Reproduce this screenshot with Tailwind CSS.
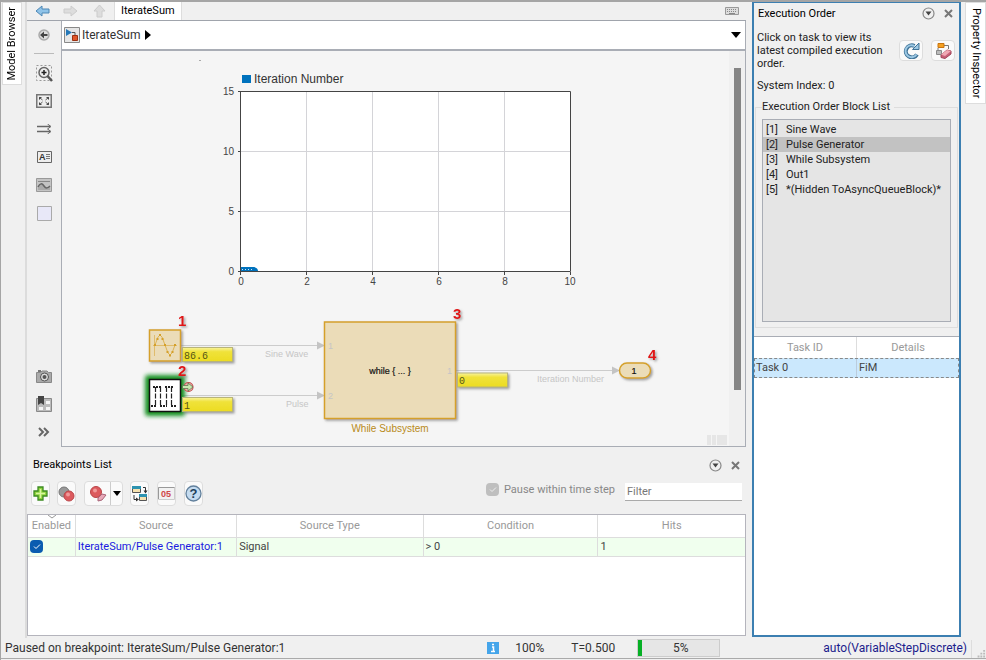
<!DOCTYPE html>
<html lang="en">
<head>
    <meta charset="UTF-8"/>
    <meta content="width=device-width, initial-scale=1.0" name="viewport"/>
    <script src="https://cdn.jsdelivr.net/npm/@tailwindcss/browser@4"></script>
    <title>IterateSum</title>
</head>
<body class="bg-[#f0f0f0] font-[Roboto,sans-serif] text-[11px] leading-4 text-[#222]">
<div class="flex h-screen flex-col border-t-2 border-l border-[#a5a5a5]">
    <main class="flex min-h-0 flex-1">
        <!-- left rail -->
        <aside class="w-[26px] shrink-0 border-r-2 border-[#dcdcdc] pl-px">
            <button class="flex h-[83px] w-5 items-center justify-center border border-[#ddd] bg-white text-black" type="button">
                <span class="rotate-180 whitespace-nowrap [writing-mode:vertical-rl]">Model Browser</span>
            </button>
        </aside>

        <div class="flex min-w-0 flex-1 flex-col">
            <!-- editor tabs -->
            <div class="flex h-[19px] shrink-0 items-center border-b border-[#a0a4ac] pl-2 pr-[7px]">
                <button class="mr-[13px]" type="button" aria-label="Back">
                    <svg width="15" height="12" viewBox="0 0 15 12"><path d="M1 6 7 1v3h7v4H7v3z" fill="#8fc3e8" stroke="#4d87b5"/></svg>
                </button>
                <button class="mr-[15px]" type="button" aria-label="Forward">
                    <svg width="15" height="12" viewBox="0 0 15 12"><path d="M14 6 8 1v3H1v4h7v3z" fill="#ddd" stroke="#ccc"/></svg>
                </button>
                <button class="mr-[8px]" type="button" aria-label="Up">
                    <svg width="13" height="14" viewBox="0 0 13 14"><path d="M6.500 1 12 7H9v6H4V7H1z" fill="#ddd" stroke="#ccc"/></svg>
                </button>
                <a class="flex h-[18px] items-center border-x border-[#ddd] bg-white px-[6px] text-black" href="#">IterateSum</a>
                <svg class="ml-auto" width="14" height="8" viewBox="0 0 14 8"><path d="M.5.5h13v7H.5z" fill="#ddd" stroke="#999"/><path d="M2 2.500h10M2 4.500h10" stroke="#888" stroke-dasharray="1 1"/><path d="M4 6.500h6" stroke="#888"/></svg>
            </div>

            <div class="flex min-h-0 flex-1">
                <!-- palette -->
                <div class="flex w-[34px] shrink-0 flex-col items-center pb-px">
                    <button class="flex h-[28px] w-full items-center justify-center" type="button" aria-label="Hide browser">
                        <svg width="12" height="12" viewBox="0 0 12 12"><circle cx="6" cy="6" r="5" fill="#ddd" stroke="#aaa" stroke-width="1.500"/><path d="M2 6 6 2.500V5h3.500v2H6v2.500z" fill="#444"/></svg>
                    </button>
                    <div class="mt-1 mb-[5px] h-px w-5 shrink-0 bg-[#bbb]"></div>
                    <button class="flex h-7 w-full items-center justify-center" type="button" aria-label="Zoom">
                        <svg width="17" height="17" viewBox="0 0 17 17" fill="none"><path d="M.5.5h15v15H.5z" stroke="#999" stroke-dasharray="2 2"/><circle cx="8" cy="7.500" r="5" fill="#eee" stroke="#666" stroke-width="1.500"/><path d="M5.500 7.500h5M8 5v5" stroke="#222" stroke-width="1.500"/><path d="m11.500 11 4.500 5" stroke="#555" stroke-width="2.500"/></svg>
                    </button>
                    <button class="flex h-7 w-full items-center justify-center" type="button" aria-label="Fit to view">
                        <svg width="16" height="14" viewBox="0 0 16 14"><path d="M.75.75h14.500v12.500H.75z" fill="#eee" stroke="#777" stroke-width="1.500"/><path d="M3 6V3h3zM10 3h3v3zM3 8v3h3zM10 11h3V8z" fill="#444"/><path d="m3 3 3.500 3M13 3 9.500 6M3 11l3.500-3M13 11 9.500 8" fill="none" stroke="#555"/></svg>
                    </button>
                    <button class="flex h-7 w-full items-center justify-center" type="button" aria-label="Signals">
                        <svg width="15" height="10" viewBox="0 0 15 10" fill="none" stroke="#666"><path d="M0 2.500h13M0 7.500h13" stroke-width="1.500"/><path d="m10.500 0 3.500 2.500L10.500 5M10.500 5 14 7.500 10.500 10"/></svg>
                    </button>
                    <button class="flex h-7 w-full items-center justify-center" type="button" aria-label="Annotation">
                        <svg width="15" height="12" viewBox="0 0 15 12"><path d="M.5.5h14v11H.5z" fill="#eee" stroke="#666"/><text x="2" y="9" font-size="9" font-weight="bold" font-family="Liberation Sans" fill="#333">A</text><path d="M9 3.500h4M9 5.500h4M9 7.500h4" stroke="#777"/></svg>
                    </button>
                    <button class="flex h-7 w-full items-center justify-center" type="button" aria-label="Image">
                        <svg width="16" height="14" viewBox="0 0 16 14"><path d="M.5.5h15v13H.5z" fill="#c4c4c4" stroke="#999"/><path d="M2 3.500h12" stroke="#888"/><path d="M2 9c2-4 4-4 6-1s4 2 6 0v4H2z" fill="#aaa"/><path d="M2 9c2-4 4-4 6-1s4 2 6 0" fill="none" stroke="#666" stroke-width="1.500"/></svg>
                    </button>
                    <button class="flex h-7 w-full items-center justify-center" type="button" aria-label="Area">
                        <svg width="15" height="15" viewBox="0 0 15 15"><path d="M.5.500h14v14H.5z" fill="#e8e8f8" stroke="#aaa"/></svg>
                    </button>
                    <button class="mt-auto flex h-7 w-full items-center justify-center" type="button" aria-label="Screenshot">
                        <svg width="16" height="13" viewBox="0 0 16 13"><path d="M2 0h3v2H2z" fill="#777"/><path d="M.5 2.500h4L6 1h5l1.500 1.500h3v10H.5z" fill="#aaa" stroke="#888"/><circle cx="8.500" cy="7" r="4" fill="#ddd" stroke="#555"/><circle cx="8.500" cy="7" r="2" fill="#555"/></svg>
                    </button>
                    <button class="flex h-7 w-full items-center justify-center" type="button" aria-label="Model views">
                        <svg width="16" height="16" viewBox="0 0 16 16"><path d="M.5 2.500h15v13H.5z" fill="#bbb" stroke="#888"/><path d="M10 5h4v3h-4zM3 11h4v3H3zM10 11h4v3h-4z" fill="#f5f5f5"/><path d="M2 0h6v9L5 7 2 9z" fill="#444"/></svg>
                    </button>
                    <button class="flex h-7 w-full items-center justify-center" type="button" aria-label="More">
                        <svg width="12" height="10" viewBox="0 0 12 10" fill="none" stroke="#666" stroke-width="2"><path d="m1 1 4 4-4 4M6 1l4 4-4 4"/></svg>
                    </button>
                </div>

                <div class="flex min-w-0 flex-1 flex-col border-r border-b border-l border-[#a9adb5]">
                    <!-- model path -->
                    <div class="flex h-[30px] shrink-0 items-center border-b-2 border-[#a9adb5] bg-white pr-1 pl-[2px] text-xs">
                        <svg class="mr-[2px]" width="16" height="16" viewBox="0 0 16 16"><path d="M.5.5h15v15H.5z" fill="#e6e6e6" stroke="#888"/><path d="M2 2v7l6-3.500z" fill="#2478b8"/><path d="M8 5.500h3v3" fill="none" stroke="#555"/><path d="M8.500 8.500h5v5h-5z" fill="#e0562a" stroke="#9c3010"/></svg>
                        <a class="text-[#333]" href="#">IterateSum</a>
                        <svg class="ml-[5px]" width="6" height="10" viewBox="0 0 6 10"><path d="M0 0v10l6-5z"/></svg>
                        <button class="ml-auto" type="button" aria-label="History"><svg width="10" height="6" viewBox="0 0 10 6"><path d="M0 0h10L5 6z"/></svg></button>
                    </div>

                    <!-- block diagram -->
                    <div class="flex min-h-0 flex-1">
                        <div class="min-w-0 flex-1 overflow-hidden bg-[#f5f5f5]">
                            <svg class="font-['Liberation_Sans',sans-serif]" width="667" height="395" viewBox="62 51 667 395">
                                <defs>
                                    <filter id="shadow" x="-20%" y="-20%" width="150%" height="150%"><feDropShadow dx="1.500" dy="1.500" stdDeviation="1" flood-color="#777" flood-opacity=".7"/></filter>
                                    <filter id="glow" x="-40%" y="-40%" width="180%" height="180%"><feGaussianBlur stdDeviation="2"/></filter>
                                    <linearGradient id="value" x2="0" y2="1"><stop stop-color="#f8f4a0"/><stop offset=".3" stop-color="#f0e23a"/><stop offset="1" stop-color="#ecdc22"/></linearGradient>
                                </defs>
                                <!-- chart -->
                                <path d="M199 60.500h2" stroke="#aaa"/>
                                <path d="M242 75h9v8h-9z" fill="#0072bd"/>
                                <text x="254" y="83" font-size="12" fill="#333">Iteration Number</text>
                                <path d="M240.500 91.500h330v180h-330z" fill="#fff"/>
                                <path d="M306.500 92v180M372.500 92v180M438.500 92v180M504.500 92v180M241 151.500h330M241 211.500h330" stroke="#d4d4d8"/>
                                <path d="M240.500 91.500h330v180h-330zM238 91.500h3M238 151.500h3M238 211.500h3M238 271.500h3M240.500 272v3M306.500 272v3M372.500 272v3M438.500 272v3M504.500 272v3M570.500 272v3" fill="none" stroke="#444"/>
                                <path d="M241 271v-4h13q4 1 4 4z" fill="#0072bd"/>
                                <path d="M242 269.500h12" stroke="#cde4f4" stroke-dasharray="1 2"/>
                                <g font-size="10" fill="#444" text-anchor="end">
                                    <text x="234" y="95">15</text><text x="234" y="155">10</text><text x="234" y="215">5</text><text x="234" y="275">0</text>
                                </g>
                                <g font-size="10" fill="#444" text-anchor="middle">
                                    <text x="241" y="285">0</text><text x="307" y="285">2</text><text x="373" y="285">4</text><text x="439" y="285">6</text><text x="505" y="285">8</text><text x="570" y="285">10</text>
                                </g>
                                <!-- signals -->
                                <path d="M181 345.500h137M181 395.500h137M456 370.500h158" stroke="#ccc"/>
                                <path d="m317 341.500 8 4-8 4zM317 391.500l8 4-8 4zM612 366.500l8 4-8 4z" fill="#c4c4c4"/>
                                <g font-size="9" fill="#c6c6c6">
                                    <text x="265" y="357">Sine Wave</text><text x="286" y="407">Pulse</text><text x="537" y="382">Iteration Number</text>
                                </g>
                                <!-- blocks -->
                                <g fill="#ebdcb8" stroke="#d5a02a" stroke-width="1.500" filter="url(#shadow)">
                                    <rect x="149.500" y="330" width="31" height="31"/>
                                    <rect x="324.500" y="322" width="131" height="96.500"/>
                                    <rect x="619.500" y="363" width="31" height="15" rx="7.500"/>
                                </g>
                                <path d="M154.500 335v21M153 345.500h24" stroke="#e0bc6c"/>
                                <path d="m155 345 3-8 2-2 2 2 3 8 3 8 2 2 2-2 3-8" fill="none" stroke="#d5a02a" stroke-width=".7"/>
                                <path d="M154 344h2v2h-2zM156.500 338h2v2h-2zM159 334h2v2h-2zM161.500 338h2v2h-2zM164 344h2v2h-2zM166.500 351h2v2h-2zM169 354.500h2v2h-2zM171.500 351h2v2h-2zM174 344h2v2h-2z" fill="#d5a02a"/>
                                <rect x="145" y="375" width="40" height="41" rx="3" fill="#169020" filter="url(#glow)"/>
                                <rect x="149.500" y="379.500" width="31" height="32" fill="#fff" stroke="#111" stroke-width="1.500"/>
                                <path d="M155.500 387v19M160.500 387v19M166.500 387v19M171.500 387v19" stroke="#222" stroke-width="1.200" stroke-dasharray="5 1.500"/>
                                <path d="M153 387h8M165 387h8M151 406h5M160 406h7M171 406h5" stroke="#222" stroke-width="2" stroke-dasharray="2 1"/>
                                <circle cx="188.500" cy="387" r="4.500" fill="#f0b0b0" stroke="#c05050" stroke-width="1.200"/>
                                <path d="M182.500 385.500h5.500V383l5 4-5 4v-2.500h-5.500z" fill="#c8e8b0" stroke="#607850" stroke-width=".8"/>
                                <g fill="url(#value)" stroke="#b8b478" filter="url(#shadow)">
                                    <rect x="182.500" y="347.500" width="50" height="14"/>
                                    <rect x="182.500" y="397.500" width="50" height="14"/>
                                    <rect x="457.500" y="373" width="50" height="14"/>
                                </g>
                                <g font-size="10" fill="#555516" font-family="Liberation Mono">
                                    <text x="184" y="359">86.6</text><text x="184" y="409">1</text><text x="459" y="384">0</text>
                                </g>
                                <g font-size="9" fill="#c6c6c6">
                                    <text x="328" y="349">1</text><text x="328" y="399">2</text><text x="447" y="374">1</text>
                                </g>
                                <text x="390" y="374" font-size="9" text-anchor="middle" fill="#111" stroke="#111" stroke-width=".2">while { ... }</text>
                                <text x="634" y="374" font-size="9" text-anchor="middle" fill="#111" stroke="#111" stroke-width=".2">1</text>
                                <text x="390" y="432" font-size="10" text-anchor="middle" fill="#b88a20">While Subsystem</text>
                                <g font-size="15" font-weight="bold" fill="#e01414" filter="url(#shadow)">
                                    <text x="178" y="326">1</text><text x="178" y="376">2</text><text x="453" y="319">3</text><text x="648" y="360">4</text>
                                </g>
                                <path d="M707 435h4v10h-4zM712 435h4v10h-4zM717 435h10v10h-10z" fill="#e6e6e6"/>
                            </svg>
                        </div>
                        <div class="flex w-4 shrink-0 justify-center bg-[#f0f0f0] pt-[17px]">
                            <div class="h-[322px] w-[7px] bg-[#858585]"></div>
                        </div>
                    </div>
                </div>
            </div>

            <!-- breakpoints -->
            <section class="shrink-0">
                <div class="flex h-[34px] items-center pt-[2px] pr-[6px] pl-[6px]">
                    <h2 class="mr-auto text-black">Breakpoints List</h2>
                    <button class="mr-[9px]" type="button" aria-label="Panel menu"><svg width="13" height="13" viewBox="0 0 13 13"><circle cx="6.500" cy="6.500" r="5.500" fill="none" stroke="#888" stroke-width="1.200"/><path d="M3.500 4.500h6l-3 4z" fill="#444"/></svg></button>
                    <button type="button" aria-label="Close breakpoints"><svg width="9" height="9" viewBox="0 0 9 9"><path d="m1 1 7 7M8 1 1 8" stroke="#777" stroke-width="2"/></svg></button>
                </div>
                <div class="flex h-[25px] items-center pr-[4px] pl-1">
                    <button class="mr-[7px] flex h-[25px] w-[19px] shrink-0 items-center justify-center rounded-sm border border-[#ddd] bg-[#fafafa]" type="button" aria-label="Add breakpoint">
                        <svg width="15" height="15" viewBox="0 0 15 15"><path d="M5 1h5v4h4v5h-4v4H5v-4H1V5h4z" fill="#8fd43c" stroke="#3d8a22" stroke-width="1.300"/><path d="M7.500 3v9M3 7.500h9" stroke="#d8f5a0" stroke-width="1.500"/></svg>
                    </button>
                    <button class="mr-2 flex h-[25px] w-[19px] shrink-0 items-center justify-center rounded-sm border border-[#ddd] bg-[#fafafa]" type="button" aria-label="Enable or disable all">
                        <svg class="shrink-0" width="17" height="16" viewBox="0 0 17 16"><circle cx="6" cy="6" r="5" fill="#999" stroke="#777"/><circle cx="11" cy="10" r="5" fill="#dc5a5e" stroke="#bb4448"/><circle cx="10" cy="8.500" r="2" fill="#f09a9a"/></svg>
                    </button>
                    <div class="mr-[7px] flex h-[25px] w-[39px] shrink-0 rounded-sm border border-[#ddd] bg-[#fafafa]">
                        <button class="flex flex-1 items-center justify-center border-r border-[#ccc]" type="button" aria-label="Clear breakpoints">
                            <svg width="18" height="17" viewBox="0 0 18 17"><circle cx="7" cy="7" r="5.500" fill="#dc5a5e" stroke="#bb4448"/><circle cx="6" cy="5.500" r="2" fill="#f09a9a"/><path d="m9 13 4-4 4 1-4 5-4 1z" fill="#e8a8b8" stroke="#a86478"/></svg>
                        </button>
                        <button class="flex w-[11px] items-center justify-center" type="button" aria-label="Clear options">
                            <svg width="8" height="5" viewBox="0 0 8 5"><path d="M0 0h8L4 5z"/></svg>
                        </button>
                    </div>
                    <button class="mr-2 flex h-[25px] w-[19px] shrink-0 items-center justify-center rounded-sm border border-[#ddd] bg-[#fafafa]" type="button" aria-label="Swap windows">
                        <svg class="shrink-0" width="17" height="17" viewBox="0 0 17 17"><path d="M1.500 1.500h8v6h-8zM8.500 9.500h7v6h-7z" fill="#f6e2b0" stroke="#555"/><path d="M1 1h9v3H1zM8 9h8v3H8z" fill="#2e93b0"/><path d="M12 2.500h2.500V7M3 10v4.500h3" fill="none" stroke="#333"/><path d="M12.500 5.500h4l-2 3zM5 12.500l3 2-3 2z" fill="#333"/></svg>
                    </button>
                    <button class="mr-2 flex h-[25px] w-[19px] shrink-0 items-center justify-center rounded-sm border border-[#ddd] bg-[#fafafa]" type="button" aria-label="Hit count">
                        <svg class="shrink-0" width="17" height="13" viewBox="0 0 17 13"><path d="M.5.5h16v12H.5z" fill="#f2f2f2" stroke="#ccc"/><path d="M.5 12V.5h16" fill="none" stroke="#999"/><text x="3" y="9.500" font-size="9" font-weight="bold" font-family="Liberation Sans" fill="#d04848">05</text></svg>
                    </button>
                    <button class="flex h-[25px] w-[19px] shrink-0 items-center justify-center rounded-sm border border-[#ddd] bg-[#fafafa]" type="button" aria-label="Help">
                        <svg class="shrink-0" width="17" height="17" viewBox="0 0 17 17"><circle cx="8.500" cy="8.500" r="7.500" fill="#c4dbf0" stroke="#62809c" stroke-width="1.300"/><text x="8.500" y="13" text-anchor="middle" font-size="13" font-weight="bold" font-family="Liberation Sans" fill="#223f5c">?</text></svg>
                    </button>
                    <label class="relative mr-[10px] mb-2 ml-auto flex items-center gap-[5px] text-[#888]">
                        <input class="size-[13px] appearance-none rounded-sm bg-[#bfbfbf]" type="checkbox" checked disabled/>
                        <svg class="pointer-events-none absolute left-[3px]" width="8" height="7" viewBox="0 0 8 7"><path d="m1 3.500 2 2 4-4" fill="none" stroke="#eee"/></svg>
                        Pause within time step
                    </label>
                    <input class="mb-1 h-[18px] w-[117px] border-b border-[#aaa] bg-white px-[2px] outline-none placeholder:text-[#777]" type="text" placeholder="Filter" aria-label="Filter"/>
                </div>
                <div class="mt-2 mb-[2px] h-[122px] border border-[#b4b4bc] bg-white">
                    <table class="w-full table-fixed border-collapse text-left">
                        <thead>
                        <tr class="h-[22px] border-b border-[#ddd] text-center text-[#999]">
                            <th class="relative w-[6.600%] border-r border-[#ddd] font-normal whitespace-nowrap">
                                <svg class="absolute top-0 left-5" width="8" height="4" viewBox="0 0 8 4"><path d="m0 0 4 3 4-3" fill="none" stroke="#999"/></svg>
                                Enabled
                            </th>
                            <th class="w-[22.500%] border-r border-[#ddd] font-normal">Source</th>
                            <th class="w-[26%] border-r border-[#ddd] font-normal">Source Type</th>
                            <th class="w-[24.400%] border-r border-[#ddd] font-normal">Condition</th>
                            <th class="font-normal">Hits</th>
                        </tr>
                        </thead>
                        <tbody>
                        <tr class="h-[19px] border-b border-[#ddd] bg-[#f0ffee] text-[#444]">
                            <td class="relative border-r border-[#ddd]">
                                <input class="absolute top-[2px] left-[2px] size-[13px] appearance-none rounded-sm bg-[#0a5cb0]" type="checkbox" checked aria-label="Enabled"/>
                                <svg class="pointer-events-none absolute top-[5px] left-[5px]" width="8" height="7" viewBox="0 0 8 7"><path d="m1 3.500 2 2 4-4" fill="none" stroke="#fff"/></svg>
                            </td>
                            <td class="border-r border-[#ddd] pl-[2px]"><a class="text-[#1a1ae0]" href="#">IterateSum/Pulse Generator:1</a></td>
                            <td class="border-r border-[#ddd] pl-[2px]">Signal</td>
                            <td class="border-r border-[#ddd] pl-[2px]">&gt; 0</td>
                            <td class="pl-[2px]">1</td>
                        </tr>
                        </tbody>
                    </table>
                </div>
            </section>
        </div>

        <!-- execution order -->
        <section class="mb-px ml-[6px] flex w-[209px] shrink-0 flex-col border-2 border-t border-[#3c7fb1]">
            <div class="flex h-[21px] shrink-0 items-center pr-[6px] pl-1">
                <h2 class="mr-auto text-black">Execution Order</h2>
                <button class="mr-[9px]" type="button" aria-label="Panel menu"><svg width="13" height="13" viewBox="0 0 13 13"><circle cx="6.500" cy="6.500" r="5.500" fill="none" stroke="#888" stroke-width="1.200"/><path d="M3.500 4.500h6l-3 4z" fill="#444"/></svg></button>
                <button type="button" aria-label="Close panel"><svg width="9" height="9" viewBox="0 0 9 9"><path d="m1 1 7 7M8 1 1 8" stroke="#777" stroke-width="2"/></svg></button>
            </div>
            <div class="flex shrink-0 items-center pt-[7px] pr-1 pl-[3px]">
                <p class="mr-auto w-[134px] leading-[13px]">Click on task to view its latest compiled execution order.</p>
                <button class="mr-2 flex h-[21px] w-6 shrink-0 items-center justify-center rounded-sm border border-[#ddd] bg-[#fafafa]" type="button" aria-label="Refresh">
                    <svg width="17" height="17" viewBox="0 0 17 17" fill="none"><path d="M14 12.500A6 6 0 1 1 11.500 4" stroke="#3f7296" stroke-width="4"/><path d="M13.500 12.500A6 6 0 1 1 11.500 4" stroke="#9cc8e4" stroke-width="2"/><path d="M16 1v6.500H9.500z" fill="#9cc8e4" stroke="#3f7296"/></svg>
                </button>
                <button class="flex h-[21px] w-6 shrink-0 items-center justify-center rounded-sm border border-[#ddd] bg-[#fafafa]" type="button" aria-label="Clear highlighting">
                    <svg width="17" height="17" viewBox="0 0 17 17"><path d="M9 3.500h4.500V7M3 6v4" fill="none" stroke="#777"/><path d="M3 1.500h6v4H3z" fill="#f5a020" stroke="#c87410"/><path d="M1.500 8.500h5v4h-5z" fill="#bbb" stroke="#888"/><path d="m6 13 6-5 4 1v3l-6 4.500-4-1z" fill="#c86078" stroke="#a04458"/><path d="m6 12.500 6-4.500 4 1-6 5z" fill="#f0a8b4"/></svg>
                </button>
            </div>
            <p class="mt-2 shrink-0 pl-[3px]">System Index: 0</p>
            <fieldset class="mx-px mt-[5px] min-w-0 shrink-0 border border-[#ddd] px-[6px] pb-[5px]">
                <legend class="pr-1">Execution Order Block List</legend>
                <ol class="mt-1 h-[203px] border border-[#a9adb5] bg-[#e5e5e5] py-[2px] leading-[15px]">
                    <li class="flex pl-[3px]"><span class="w-5 shrink-0">[1]</span>Sine Wave</li>
                    <li class="flex bg-[#c2c2c2] pl-[3px]"><span class="w-5 shrink-0">[2]</span>Pulse Generator</li>
                    <li class="flex pl-[3px]"><span class="w-5 shrink-0">[3]</span>While Subsystem</li>
                    <li class="flex pl-[3px]"><span class="w-5 shrink-0">[4]</span>Out1</li>
                    <li class="flex pl-[3px] whitespace-nowrap"><span class="w-5 shrink-0">[5]</span>*(Hidden ToAsyncQueueBlock)*</li>
                </ol>
            </fieldset>
            <div class="mt-2 flex-1 border-t border-[#a9adb5] bg-white">
                <table class="w-full table-fixed border-collapse text-left">
                    <thead>
                    <tr class="h-[21px] text-center text-[#999]">
                        <th class="border-r border-[#ddd] font-normal">Task ID</th>
                        <th class="font-normal">Details</th>
                    </tr>
                    </thead>
                    <tbody>
                    <tr class="h-5 bg-[#cbe8fd] text-[#444] outline -outline-offset-1 outline-dashed outline-[#888]">
                        <td class="border-r border-[#bcd] pl-[2px]">Task 0</td>
                        <td class="pl-[2px]">FiM</td>
                    </tr>
                    </tbody>
                </table>
            </div>
        </section>

        <!-- right rail -->
        <aside class="w-[25px] shrink-0 pl-1">
            <button class="flex h-[102px] w-[21px] items-center justify-center border border-[#ddd] bg-white text-black" type="button">
                <span class="whitespace-nowrap [writing-mode:vertical-rl]">Property Inspector</span>
            </button>
        </aside>
    </main>

    <!-- status bar -->
    <footer class="mb-px flex h-[21px] shrink-0 items-center border-b border-[#aaa] pl-1 text-xs text-[#333]">
        <span class="mr-auto">Paused on breakpoint: IterateSum/Pulse Generator:1</span>
        <svg class="mr-4" width="12" height="12" viewBox="0 0 12 12"><path d="M0 0h12v12H0z" fill="#45a5ea"/><path d="M5 5h1.500v4M4 9.500h4M5 2.500h2" fill="none" stroke="#fff" stroke-width="1.500"/></svg>
        <span class="w-[56px]">100%</span>
        <span class="w-[66px]">T=0.500</span>
        <div class="flex h-[18px] w-[83px] border border-[#ccc] bg-[#e6e6e6]">
            <div class="bg-[#06b025]" style="width: 5%"></div>
            <span class="flex-1 text-center leading-4">5%</span>
        </div>
        <a class="ml-[103px] text-[#1c1c8c]" href="#">auto(VariableStepDiscrete)</a>
        <svg class="ml-1 self-end border-l border-[#ddd]" width="15" height="18" viewBox="0 0 15 18"><path d="M12 10h2v2h-2zM9 13h2v2H9zM12 13h2v2h-2zM6 16h2v2H6zM9 16h2v2H9zM12 16h2v2h-2z" fill="#bbb"/></svg>
    </footer>
</div>
</body>
</html>
